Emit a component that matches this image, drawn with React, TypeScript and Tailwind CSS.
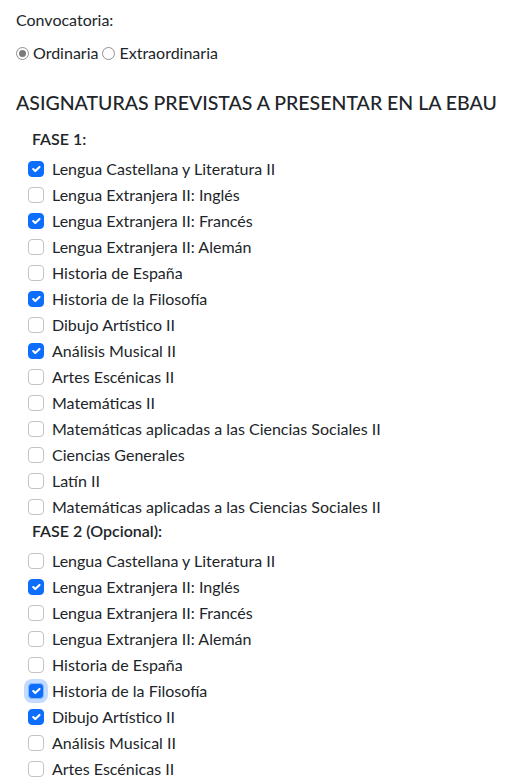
import React, { useState } from 'react';

const SUBJECTS = [
  'Lengua Castellana y Literatura II',
  'Lengua Extranjera II: Inglés',
  'Lengua Extranjera II: Francés',
  'Lengua Extranjera II: Alemán',
  'Historia de España',
  'Historia de la Filosofía',
  'Dibujo Artístico II',
  'Análisis Musical II',
  'Artes Escénicas II',
  'Matemáticas II',
  'Matemáticas aplicadas a las Ciencias Sociales II',
  'Ciencias Generales',
  'Latín II',
  'Matemáticas aplicadas a las Ciencias Sociales II',
];

const Radio = ({ checked, label, onClick }: { checked: boolean; label: string; onClick: () => void }) => (
  <label className="inline-flex items-center cursor-pointer" onClick={onClick}>
    <span className="w-[13px] h-[13px] rounded-full border border-[#8f8f8f] bg-white flex items-center justify-center mr-[4px]">
      {checked && <span className="w-[7px] h-[7px] rounded-full bg-[#7a7a7a]" />}
    </span>
    <span>{label}</span>
  </label>
);

const Check = ({ label, checked, focused, onToggle }: { label: string; checked: boolean; focused?: boolean; onToggle: () => void }) => (
  <div className="flex items-center h-6 mb-[2px] last:mb-0 cursor-pointer" onClick={onToggle}>
    <span
      className={
        'w-4 h-4 rounded-[4px] border flex items-center justify-center shrink-0 ' +
        (checked ? 'bg-[#0d6efd] border-[#0d6efd] ' : 'bg-white border-[#c4c4c4] ') +
        (focused ? 'ring-4 ring-[#0d6efd]/25 border-[#86b7fe]' : '')
      }
    >
      {checked && (
        <svg viewBox="0 0 20 20" className="w-4 h-4" fill="none">
          <path d="m6 10 3 3 6-6" stroke="#fff" strokeWidth="3" strokeLinecap="round" strokeLinejoin="round" />
        </svg>
      )}
    </span>
    <span className="ml-2 whitespace-nowrap">{label}</span>
  </div>
);

function Phase({ title, initial, focusIndex }: { title: string; initial: number[]; focusIndex?: number }) {
  const [checked, setChecked] = useState<number[]>(initial);
  const toggle = (i: number) =>
    setChecked(prev => (prev.includes(i) ? prev.filter(x => x !== i) : [...prev, i]));

  return (
    <div>
      <div className="pl-4 font-semibold h-6 leading-6 mb-1.5">{title}</div>
      <div className="pl-3">
        {SUBJECTS.map((s, i) => (
          <Check
            key={i}
            label={s}
            checked={checked.includes(i)}
            focused={i === focusIndex}
            onToggle={() => toggle(i)}
          />
        ))}
      </div>
    </div>
  );
}

export default function App() {
  const [conv, setConv] = useState<'ordinaria' | 'extra'>('ordinaria');

  return (
    <div className="min-h-screen bg-white text-[#212529] text-base leading-6 px-4 pt-2 font-['Lato','Segoe_UI',sans-serif]">
      <div className="mb-[9px]">Convocatoria:</div>
      <div className="flex items-center gap-[4px] h-6">
        <Radio label="Ordinaria" checked={conv === 'ordinaria'} onClick={() => setConv('ordinaria')} />
        <Radio label="Extraordinaria" checked={conv === 'extra'} onClick={() => setConv('extra')} />
      </div>

      <h5 className="mt-[26px] mb-3 text-[19.5px] font-medium leading-6">ASIGNATURAS PREVISTAS A PRESENTAR EN LA EBAU</h5>

      <Phase title="FASE 1:" initial={[0, 2, 5, 7]} />
      <Phase title="FASE 2 (Opcional):" initial={[1, 5, 6]} focusIndex={5} />
    </div>
  );
}
